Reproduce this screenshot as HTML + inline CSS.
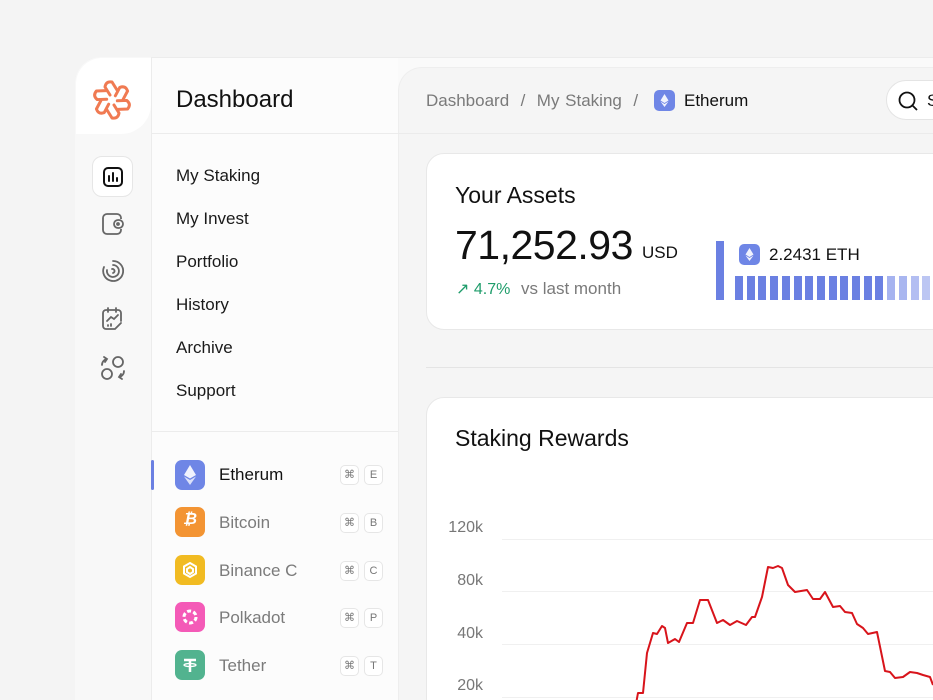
<!DOCTYPE html>
<html><head><meta charset="utf-8"><style>
*{margin:0;padding:0;box-sizing:border-box}
html,body{width:933px;height:700px;overflow:hidden}
body{background:#f4f4f4;font-family:"Liberation Sans",sans-serif;position:relative;color:#111}
.abs{position:absolute}
.outer{left:75px;top:57px;width:900px;height:660px;background:#fafafa;border:1px solid #ececec;border-radius:26px}
.rail{left:75px;top:57px;width:77px;height:660px;border-right:1px solid #ececec;border-radius:26px 0 0 0;background:#f8f8f8}
.logo{left:76px;top:58px;width:75px;height:76px;background:#fff;border-radius:26px 0 30px 0}
.menu{left:152px;top:58px;width:246px;height:650px;background:#fcfcfc}
.main{left:398px;top:67px;width:560px;height:650px;background:#f5f5f5;border-radius:24px 0 0 0;border:1px solid #eee;border-right:none}
.mi{position:absolute;left:176px;font-size:17px;color:#1a1a1a}
.coin{position:absolute;left:175px;width:30px;height:30px;border-radius:7px}
.cn{position:absolute;left:219px;font-size:17px;color:#7b7b7b}
.kb{position:absolute;width:19px;height:20px;border:1px solid #e6e6e6;border-radius:5px;background:#fff;font-size:11px;color:#777;text-align:center;line-height:18px}
.card{position:absolute;background:#fff;border:1px solid #e8e8e8;border-radius:18px}
.bar{position:absolute;top:276px;width:8px;height:24px;background:#6b80e2}
.yl{position:absolute;font-size:16px;color:#777;text-align:right;width:40px;left:443px}
.gl{position:absolute;left:502px;width:431px;height:1px;background:#f0f0f0}
</style></head><body>
<div class="abs outer"></div>
<div class="abs rail"></div>
<div class="abs logo"></div>
<svg class="abs" style="left:91px;top:79px" width="42" height="42" viewBox="0 0 42 42" fill="none" stroke="#f07a52" stroke-width="3" stroke-linecap="round" stroke-linejoin="round">
<g transform="translate(21,21)">
<path id="p" d="M-2,-5 L-7,-13 Q-6,-19 0,-18 L5,-10"/>
<use href="#p" transform="rotate(60)"/><use href="#p" transform="rotate(120)"/><use href="#p" transform="rotate(180)"/><use href="#p" transform="rotate(240)"/><use href="#p" transform="rotate(300)"/>
</g></svg>
<div class="abs" style="left:92px;top:156px;width:41px;height:41px;background:#fff;border:1px solid #e6e6e6;border-radius:10px"></div>
<svg class="abs" style="left:102px;top:166px" width="22" height="22" viewBox="0 0 22 22" fill="none" stroke="#111" stroke-width="2" stroke-linecap="round"><rect x="2" y="2" width="18" height="18" rx="4"/><path d="M7 15V10M11 15V7M15 15V12"/></svg>
<svg class="abs" style="left:100px;top:211px" width="26" height="26" viewBox="0 0 26 26" fill="none" stroke="#666" stroke-width="1.8"><path d="M21 8V7a4 4 0 0 0-4-4H7a4 4 0 0 0-4 4v12a4 4 0 0 0 4 4h10a4 4 0 0 0 4-4v-1"/><rect x="14" y="9" width="9" height="8" rx="4"/><circle cx="18" cy="13" r="1"/></svg>
<svg class="abs" style="left:100px;top:258px" width="26" height="26" viewBox="0 0 26 26" fill="none" stroke="#666" stroke-width="1.8" stroke-linecap="round"><path d="M13 3a10 10 0 1 1-9 6"/><path d="M13 7a6 6 0 1 1-6 5"/><path d="M12 11a2 2 0 1 1 1 4"/></svg>
<svg class="abs" style="left:100px;top:306px" width="26" height="26" viewBox="0 0 26 26" fill="none" stroke="#666" stroke-width="1.8" stroke-linecap="round"><path d="M21 15V7a3 3 0 0 0-3-3H6a3 3 0 0 0-3 3v13a3 3 0 0 0 3 3h9l6-6"/><path d="M8 2v4M16 2v4M7 15l4-4 3 2 4-4M8 19v1M11 18v2"/></svg>
<svg class="abs" style="left:99px;top:354px" width="28" height="28" viewBox="0 0 28 28" fill="none" stroke="#666" stroke-width="1.8" stroke-linecap="round"><circle cx="19" cy="8" r="5"/><circle cx="8" cy="20" r="5"/><path d="M3 11a6 6 0 0 1 5-6M5 3l3 2-2 3M25 17a6 6 0 0 1-5 6M23 25l-3-2 2-3"/></svg>
<div class="abs menu"></div>
<div class="abs" style="left:152px;top:133px;width:246px;height:1px;background:#ececec"></div>
<div class="abs" style="left:176px;top:86px;font-size:24px;color:#111">Dashboard</div>
<div class="mi" style="top:166px">My Staking</div>
<div class="mi" style="top:209px">My Invest</div>
<div class="mi" style="top:252px">Portfolio</div>
<div class="mi" style="top:295px">History</div>
<div class="mi" style="top:338px">Archive</div>
<div class="mi" style="top:381px">Support</div>
<div class="abs" style="left:152px;top:431px;width:246px;height:1px;background:#ececec"></div>
<div class="abs" style="left:151px;top:460px;width:3px;height:30px;background:#6b80e2;border-radius:2px"></div>
<div class="coin" style="top:460px;background:#6f86e6"></div>
<svg class="abs" style="left:175px;top:460px" width="30" height="30" viewBox="0 0 30 30"><path d="M15 5l-6 10 6 3.5 6-3.5z" fill="#fff" opacity=".9"/><path d="M15 20l-6-3.5 6 8.5 6-8.5z" fill="#fff" opacity=".75"/></svg>
<div class="cn" style="top:465px;color:#111">Etherum</div>
<div class="coin" style="top:507px;background:#f39433"></div>
<div class="abs" style="left:175px;top:511px;width:30px;text-align:center;color:#fff;font-weight:bold;font-size:16px;font-style:italic">₿</div>
<div class="cn" style="top:513px">Bitcoin</div>
<div class="coin" style="top:555px;background:#f1bb22"></div>
<svg class="abs" style="left:175px;top:555px" width="30" height="30" viewBox="0 0 30 30" fill="none" stroke="#fff" stroke-width="2"><path d="M15 8l6 3.5v7L15 22l-6-3.5v-7z"/><path d="M15 12l3 2v3l-3 2-3-2v-3z"/></svg>
<div class="cn" style="top:561px">Binance C</div>
<div class="coin" style="top:602px;background:#f45ab7"></div>
<svg class="abs" style="left:175px;top:602px" width="30" height="30" viewBox="0 0 30 30" fill="none" stroke="#fff" stroke-width="3" stroke-dasharray="4 2.3"><circle cx="15" cy="15" r="6"/></svg>
<div class="cn" style="top:608px">Polkadot</div>
<div class="coin" style="top:650px;background:#52b38f"></div>
<svg class="abs" style="left:175px;top:650px" width="30" height="30" viewBox="0 0 30 30" fill="none" stroke="#fff" stroke-width="2.5"><path d="M9 10h12M15 10v12"/><ellipse cx="15" cy="15" rx="6" ry="1.5" stroke-width="1.3"/></svg>
<div class="cn" style="top:656px">Tether</div>
<div class="kb" style="left:340px;top:465px">⌘</div><div class="kb" style="left:364px;top:465px">E</div>
<div class="kb" style="left:340px;top:513px">⌘</div><div class="kb" style="left:364px;top:513px">B</div>
<div class="kb" style="left:340px;top:561px">⌘</div><div class="kb" style="left:364px;top:561px">C</div>
<div class="kb" style="left:340px;top:608px">⌘</div><div class="kb" style="left:364px;top:608px">P</div>
<div class="kb" style="left:340px;top:656px">⌘</div><div class="kb" style="left:364px;top:656px">T</div>
<div class="abs main"></div>
<div class="abs" style="left:398px;top:133px;width:535px;height:1px;background:#ebebeb"></div>
<div class="abs" style="left:426px;top:91px;font-size:17px;color:#7a7a7a;word-spacing:1px">Dashboard&nbsp; / &nbsp;My Staking&nbsp; / </div>
<div class="abs" style="left:654px;top:90px;width:21px;height:21px;background:#6f86e6;border-radius:5px"></div>
<svg class="abs" style="left:654px;top:90px" width="21" height="21" viewBox="0 0 21 21"><path d="M10.5 4l-4 6.5 4 2.5 4-2.5z M10.5 14l-4-2.5 4 5.5 4-5.5z" fill="#fff" opacity=".9"/></svg>
<div class="abs" style="left:684px;top:91px;font-size:17px;color:#111">Etherum</div>
<div class="abs" style="left:886px;top:80px;width:80px;height:40px;background:#fff;border:1px solid #e4e4e4;border-radius:20px"></div>
<svg class="abs" style="left:897px;top:90px" width="22" height="22" viewBox="0 0 22 22" fill="none" stroke="#111" stroke-width="1.8"><circle cx="10" cy="10" r="7.5"/><path d="M15.5 15.5L20 20"/></svg>
<div class="abs" style="left:927px;top:91px;font-size:17px">S</div>
<div class="card" style="left:426px;top:153px;width:540px;height:177px"></div>
<div class="abs" style="left:455px;top:182px;font-size:23px">Your Assets</div>
<div class="abs" style="left:455px;top:222px;font-size:41px;letter-spacing:-0.5px">71,252.93</div>
<div class="abs" style="left:642px;top:243px;font-size:17px">USD</div>
<div class="abs" style="left:456px;top:279px;font-size:16px;color:#1f9d6b">↗ 4.7%</div>
<div class="abs" style="left:521px;top:279px;font-size:17px;color:#7a7a7a">vs last month</div>
<div class="abs" style="left:716px;top:241px;width:8px;height:59px;background:#6b80e2"></div>
<div class="abs" style="left:739px;top:244px;width:21px;height:21px;background:#6f86e6;border-radius:5px"></div>
<svg class="abs" style="left:739px;top:244px" width="21" height="21" viewBox="0 0 21 21"><path d="M10.5 4l-4 6.5 4 2.5 4-2.5z M10.5 14l-4-2.5 4 5.5 4-5.5z" fill="#fff" opacity=".9"/></svg>
<div class="abs" style="left:769px;top:245px;font-size:17px">2.2431 ETH</div>
<div class="bar" style="left:735px"></div><div class="bar" style="left:746.7px"></div><div class="bar" style="left:758.4px"></div><div class="bar" style="left:770.1px"></div><div class="bar" style="left:781.8px"></div><div class="bar" style="left:793.5px"></div><div class="bar" style="left:805.2px"></div><div class="bar" style="left:816.9px"></div><div class="bar" style="left:828.6px"></div><div class="bar" style="left:840.3px"></div><div class="bar" style="left:852px"></div><div class="bar" style="left:863.7px"></div><div class="bar" style="left:875.4px"></div>
<div class="bar" style="left:887.1px;background:#a6b3f0"></div><div class="bar" style="left:898.8px;background:#a9b6f0"></div><div class="bar" style="left:910.5px;background:#b3bef2"></div><div class="bar" style="left:922.2px;background:#bcc6f3"></div>
<div class="abs" style="left:426px;top:367px;width:507px;height:1px;background:#e4e4e4"></div>
<div class="card" style="left:426px;top:397px;width:540px;height:320px"></div>
<div class="abs" style="left:455px;top:425px;font-size:23px">Staking Rewards</div>
<div class="yl" style="top:519px">120k</div>
<div class="yl" style="top:572px">80k</div>
<div class="yl" style="top:625px">40k</div>
<div class="yl" style="top:677px">20k</div>
<div class="gl" style="top:539px"></div><div class="gl" style="top:591px"></div><div class="gl" style="top:644px"></div><div class="gl" style="top:697px"></div>
<svg class="abs" style="left:0;top:0" width="933" height="700" fill="none" stroke="#d8141b" stroke-width="2" stroke-linejoin="round"><polyline points="636.7,700 638,693 643,693 647,653 653,633 657,634 662,626 665,628 668,643 675,639 679,642 687,623 693,623 700,600 708,600 717,623 723,620 730,625 737,621 746,625 752,617 755,617 762,597 768,567 773,568 778,566 782,568 788,585 795,592 807,590 813,599 820,599 825,592 833,607 840,606 845,612 852,613 857,624 863,628 868,634 877,632 885,671 890,672 895,678 903,677 910,672 917,673 923,675 930,677 933,685"/></svg>
</body></html>
